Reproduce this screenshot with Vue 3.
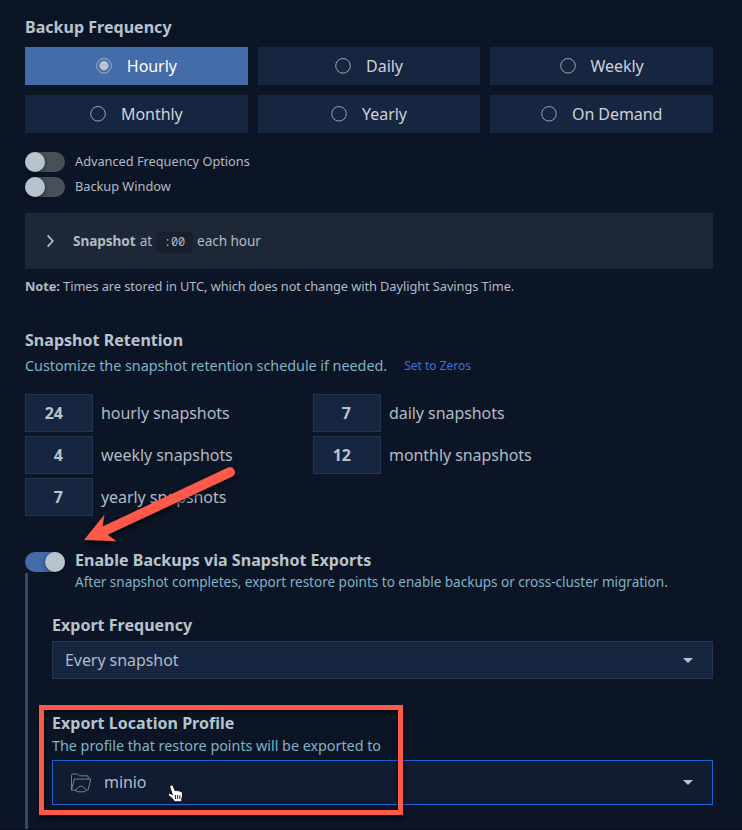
<script setup>
const frequencies = ['Hourly', 'Daily', 'Weekly', 'Monthly', 'Yearly', 'On Demand']
const selected = 'Hourly'
const toggles = ['Advanced Frequency Options', 'Backup Window']
const retention = [
  { n: 24, unit: 'hourly' },
  { n: 7, unit: 'daily' },
  { n: 4, unit: 'weekly' },
  { n: 12, unit: 'monthly' },
  { n: 7, unit: 'yearly' },
]
</script>

<template>
  <main class="page">
    <h3 class="title">Backup Frequency</h3>
    <div class="freqs">
      <div v-for="f in frequencies" :key="f" class="freq" :class="{ on: f === selected }">
        <svg class="radio" width="16" height="16" viewBox="0 0 16 16">
          <circle cx="8" cy="7.8" r="7.3" fill="none" stroke="#b8c4cd" stroke-width="0.8" />
          <circle v-if="f === selected" cx="8" cy="7.8" r="4.7" fill="#b8c4cd" />
        </svg>
        <span>{{ f }}</span>
      </div>
    </div>

    <div class="toggles">
      <div v-for="t in toggles" :key="t" class="toggle-row">
        <span class="switch"><i class="knob"></i></span>
        <span class="toggle-label">{{ t }}</span>
      </div>
    </div>

    <div class="schedule">
      <svg class="chevron" width="10" height="14" viewBox="0 0 10 14">
        <path d="M2.6 1.4 L7.8 7 L2.6 12.6" fill="none" stroke="#b8c4cd" stroke-width="1.6" />
      </svg>
      <b>Snapshot</b><span class="at">at</span><code>:00</code><span>each hour</span>
    </div>
    <p class="note"><b>Note:</b> Times are stored in UTC, which does not change with Daylight Savings Time.</p>

    <h3 class="title retention-title">Snapshot Retention</h3>
    <div class="hint-row">
      <span class="hint">Customize the snapshot retention schedule if needed.</span>
      <a class="link">Set to Zeros</a>
    </div>
    <div class="retention">
      <div v-for="r in retention" :key="r.unit" class="keep">
        <span class="num">{{ r.n }}</span>
        <span>{{ r.unit }} snapshots</span>
      </div>
    </div>

    <div class="enable">
      <span class="switch active"><i class="knob"></i></span>
      <div class="enable-text">
        <h3 class="title">Enable Backups via Snapshot Exports</h3>
        <p class="hint small">After snapshot completes, export restore points to enable backups or cross-cluster migration.</p>
      </div>
    </div>

    <section class="exports">
      <h3 class="title">Export Frequency</h3>
      <div class="select">
        <span>Every snapshot</span>
        <svg class="caret" width="10" height="5" viewBox="0 0 10 5"><path d="M0 0H10L5 5Z" fill="#b8c4cd" /></svg>
      </div>
      <h3 class="title profile-title">Export Location Profile</h3>
      <p class="hint profile-hint">The profile that restore points will be exported to</p>
      <div class="select focus">
        <svg class="folder" width="22" height="20" viewBox="0 0 22 20" fill="none" stroke="#7f8b97" stroke-width="0.9">
          <path d="M1.5 17.2 V2.5 Q1.5 1 3 1 H7.5 L9.3 2.8 H17 Q18.3 2.8 18.3 4.2 V6" />
          <path d="M5.5 17.2 H1.5 L4.3 6 H20.8 L18 17.2 H16.5" />
          <path d="M8 18.8 Q5.3 18.6 5.6 16.8 Q6 15.6 7.5 15.5 Q8.6 13 11 13 Q13.4 13 14.2 15.4 Q16 15.6 16 17.1 Q15.8 18.6 13.8 18.8 Z" />
        </svg>
        <span class="profile-name">minio</span>
        <svg class="caret" width="10" height="5" viewBox="0 0 10 5"><path d="M0 0H10L5 5Z" fill="#b8c4cd" /></svg>
      </div>
    </section>

    <div class="callout"></div>
    <svg class="arrow" width="180" height="100" viewBox="70 455 180 100">
      <path d="M228 467.6 L102.5 526.5 L104.5 514.5 L84 540 L116.5 541.2 L107.8 534.8 L232.5 476.5 A5 5 0 0 0 228 467.6 Z" fill="#ff5a49" />
    </svg>
    <svg class="pointer" width="18" height="20" viewBox="0 0 16 18">
      <path d="M3.2 1.2 Q4.6 0.2 5.5 1.8 L7.2 6 Q8.5 5 9.4 6.2 Q10.8 5.4 11.6 6.6 Q13.3 6.1 13.7 8 Q14.3 11 13.2 13.4 V16 H6.5 L5.7 14.2 L1.2 10.1 Q0.7 8.4 2.3 8.3 L4.7 9.6 L2.5 3 Q2.2 1.8 3.2 1.2 Z" fill="#fff" stroke="#000" stroke-width="0.8" />
      <path d="M7.5 10 V13.5 M9.5 10 V13.5 M11.5 10 V13.5" stroke="#000" stroke-width="0.8" />
    </svg>
  </main>
</template>

<style>
body {
  margin: 0;
  background: #0c1525;
}
</style>

<style scoped>
.page {
  position: relative;
  box-sizing: border-box;
  width: 742px;
  height: 830px;
  padding: 16px 29px 0 25px;
  overflow: hidden;
  border-bottom: 1px solid #080d1c;
  background: #0c1525;
  color: #b0bbc4;
  font-family: "Noto Sans", sans-serif;
  font-size: 16px;
  letter-spacing: -0.06px;
}
.title {
  margin: 0;
  color: #b8c4cd;
  font-size: 16px;
  line-height: 22px;
  font-weight: 700;
  letter-spacing: 0.03px;
}
.freqs {
  display: grid;
  grid-template-columns: repeat(3, 1fr);
  gap: 10px;
  margin-top: 9px;
}
.freq {
  display: flex;
  align-items: center;
  justify-content: center;
  gap: 15px;
  height: 38px;
  background: #162540;
  color: #ccd2d8;
}
.freq.on {
  background: #446ca9;
  color: #fff;
}
.toggles {
  display: grid;
  gap: 5px;
  margin-top: 19px;
}
.toggle-row {
  display: flex;
  gap: 10px;
  height: 20px;
  font-size: 12.8px;
  letter-spacing: -0.03px;
}
.toggle-label {
  line-height: 18px;
}
.switch {
  display: flex;
  flex: none;
  width: 40px;
  height: 20px;
  border-radius: 10px;
  background: #484f58;
}
.switch.active {
  justify-content: flex-end;
  background: #446ca9;
}
.knob {
  width: 20px;
  height: 20px;
  border-radius: 50%;
  background: #b8c4cd;
  box-shadow: 0 1px 4px rgba(0, 0, 0, 0.5);
}
.schedule {
  display: flex;
  align-items: center;
  height: 56px;
  margin-top: 16px;
  padding-left: 20px;
  background: #1e2735;
  font-size: 13.6px;
  line-height: 20px;
}
.chevron {
  margin-right: 18px;
}
.at {
  margin-left: 4px;
}
code {
  box-sizing: border-box;
  width: 37px;
  height: 21px;
  margin: 2px 4px 0;
  border-radius: 3px;
  background: #19202d;
  font-family: "Noto Sans Mono", "DejaVu Sans Mono", monospace;
  font-size: 11.9px;
  line-height: 19px;
  text-align: center;
}
.note {
  margin: 7px 0 0;
  font-size: 12.8px;
  letter-spacing: -0.07px;
  line-height: 20px;
}
.retention-title {
  margin-top: 33px;
}
.hint-row {
  display: flex;
  gap: 17px;
  height: 20px;
  margin-top: 5px;
  line-height: 20px;
}
.hint {
  margin: 0;
  color: #7fb3c6;
  font-size: 14.4px;
  letter-spacing: -0.04px;
}
.link {
  color: #4370db;
  font-size: 12px;
  letter-spacing: 0;
}
.retention {
  display: grid;
  grid-template-columns: 288px 288px;
  gap: 4px 0;
  margin-top: 18px;
}
.keep {
  display: flex;
  align-items: center;
  gap: 8px;
  height: 38px;
}
.num {
  box-sizing: border-box;
  width: 68px;
  height: 38px;
  padding-right: 29px;
  border: 1px solid #26354f;
  background: #162540;
  color: #b8c4cd;
  font-weight: 700;
  letter-spacing: 0;
  line-height: 36px;
  text-align: right;
}
.enable {
  display: flex;
  gap: 10px;
  height: 57px;
  margin-top: 36px;
}
.enable .enable-text {
  margin-top: -3px;
}
.small {
  font-size: 13.6px;
  line-height: 22px;
}
.exports {
  height: 260px;
  margin-top: -36px;
  padding: 41px 0 0 24px;
  border-left: 3px solid #384365;
}
.select {
  display: flex;
  align-items: center;
  box-sizing: border-box;
  height: 38px;
  margin-top: 5px;
  padding: 0 19px 0 12px;
  border: 1px solid #26354f;
  background: #162540;
}
.select.focus {
  height: 45px;
  margin-top: 4px;
  padding-left: 17px;
  border-color: #1f62d2;
  background: #111c32;
}
.caret {
  margin-left: auto;
}
.folder {
  margin-right: 12px;
}
.profile-name {
  line-height: 22px;
  padding-bottom: 1px;
}
.profile-title {
  margin-top: 33px;
}
.profile-hint {
  line-height: 20px;
  margin-top: 2px;
}
.callout {
  position: absolute;
  left: 39px;
  top: 705px;
  box-sizing: border-box;
  width: 364px;
  height: 110px;
  border: 5px solid #ff5a49;
  filter: drop-shadow(0 3px 2px rgba(0, 0, 0, 0.6));
}
.arrow {
  position: absolute;
  left: 70px;
  top: 455px;
  filter: drop-shadow(0 3px 2px rgba(0, 0, 0, 0.6));
}
.pointer {
  position: absolute;
  left: 167px;
  top: 784px;
}
</style>
